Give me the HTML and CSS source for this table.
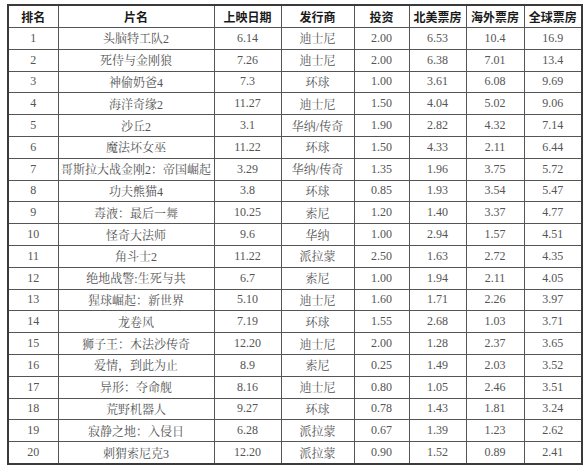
FILE: index.html
```html
<!DOCTYPE html>
<html lang="zh">
<head>
<meta charset="utf-8">
<link rel="stylesheet" href="styles.css">
</head>
<body>
<table class="box">
<colgroup>
<col class="c1"><col class="c2"><col class="c3"><col class="c4"><col class="c5"><col class="c6"><col class="c7"><col class="c8">
</colgroup>
<thead>
<tr><th>排名</th><th>片名</th><th>上映日期</th><th>发行商</th><th>投资</th><th>北美票房</th><th>海外票房</th><th>全球票房</th></tr>
</thead>
<tbody>
<tr><td>1</td><td>头脑特工队2</td><td>6.14</td><td>迪士尼</td><td>2.00</td><td>6.53</td><td>10.4</td><td>16.9</td></tr>
<tr><td>2</td><td>死侍与金刚狼</td><td>7.26</td><td>迪士尼</td><td>2.00</td><td>6.38</td><td>7.01</td><td>13.4</td></tr>
<tr><td>3</td><td>神偷奶爸4</td><td>7.3</td><td>环球</td><td>1.00</td><td>3.61</td><td>6.08</td><td>9.69</td></tr>
<tr><td>4</td><td>海洋奇缘2</td><td>11.27</td><td>迪士尼</td><td>1.50</td><td>4.04</td><td>5.02</td><td>9.06</td></tr>
<tr><td>5</td><td>沙丘2</td><td>3.1</td><td>华纳/传奇</td><td>1.90</td><td>2.82</td><td>4.32</td><td>7.14</td></tr>
<tr><td>6</td><td>魔法坏女巫</td><td>11.22</td><td>环球</td><td>1.50</td><td>4.33</td><td>2.11</td><td>6.44</td></tr>
<tr><td>7</td><td>哥斯拉大战金刚2：帝国崛起</td><td>3.29</td><td>华纳/传奇</td><td>1.35</td><td>1.96</td><td>3.75</td><td>5.72</td></tr>
<tr><td>8</td><td>功夫熊猫4</td><td>3.8</td><td>环球</td><td>0.85</td><td>1.93</td><td>3.54</td><td>5.47</td></tr>
<tr><td>9</td><td>毒液：最后一舞</td><td>10.25</td><td>索尼</td><td>1.20</td><td>1.40</td><td>3.37</td><td>4.77</td></tr>
<tr><td>10</td><td>怪奇大法师</td><td>9.6</td><td>华纳</td><td>1.00</td><td>2.94</td><td>1.57</td><td>4.51</td></tr>
<tr><td>11</td><td>角斗士2</td><td>11.22</td><td>派拉蒙</td><td>2.50</td><td>1.63</td><td>2.72</td><td>4.35</td></tr>
<tr><td>12</td><td>绝地战警:生死与共</td><td>6.7</td><td>索尼</td><td>1.00</td><td>1.94</td><td>2.11</td><td>4.05</td></tr>
<tr><td>13</td><td>猩球崛起：新世界</td><td>5.10</td><td>迪士尼</td><td>1.60</td><td>1.71</td><td>2.26</td><td>3.97</td></tr>
<tr><td>14</td><td>龙卷风</td><td>7.19</td><td>环球</td><td>1.55</td><td>2.68</td><td>1.03</td><td>3.71</td></tr>
<tr><td>15</td><td>狮子王：木法沙传奇</td><td>12.20</td><td>迪士尼</td><td>2.00</td><td>1.28</td><td>2.37</td><td>3.65</td></tr>
<tr><td>16</td><td>爱情，到此为止</td><td>8.9</td><td>索尼</td><td>0.25</td><td>1.49</td><td>2.03</td><td>3.52</td></tr>
<tr><td>17</td><td>异形：夺命舰</td><td>8.16</td><td>迪士尼</td><td>0.80</td><td>1.05</td><td>2.46</td><td>3.51</td></tr>
<tr><td>18</td><td>荒野机器人</td><td>9.27</td><td>环球</td><td>0.78</td><td>1.43</td><td>1.81</td><td>3.24</td></tr>
<tr><td>19</td><td>寂静之地：入侵日</td><td>6.28</td><td>派拉蒙</td><td>0.67</td><td>1.39</td><td>1.23</td><td>2.62</td></tr>
<tr><td>20</td><td>刺猬索尼克3</td><td>12.20</td><td>派拉蒙</td><td>0.90</td><td>1.52</td><td>0.89</td><td>2.41</td></tr>
</tbody>
</table>
</body>
</html>
```
FILE: styles.css
```css
html, body {
  margin: 0;
  padding: 0;
  background: #ffffff;
}
body {
  padding: 4px 0 0 7px;
}
.box {
  border-collapse: collapse;
  table-layout: fixed;
  width: 574px;
  border: 2px solid #3a3a3a;
}
.c1 { width: 50px; }
.c2 { width: 156px; }
.c3 { width: 67px; }
.c4 { width: 73px; }
.c5 { width: 55px; }
.c6 { width: 57px; }
.c7 { width: 58px; }
.c8 { width: 58px; }
.box th, .box td {
  border: 1px solid #555555;
  text-align: center;
  padding: 0;
  white-space: nowrap;
  overflow: hidden;
}
.box th {
  height: 21px;
  font-family: "Noto Sans CJK SC", "Noto Sans", sans-serif;
  font-weight: bold;
  font-size: 12px;
  color: #1a1a1a;
}
.box td {
  height: 20.8px;
  font-family: "Liberation Serif", "Noto Serif CJK SC", "Noto Sans CJK SC", serif;
  font-size: 12px;
  color: #555555;
}
```
